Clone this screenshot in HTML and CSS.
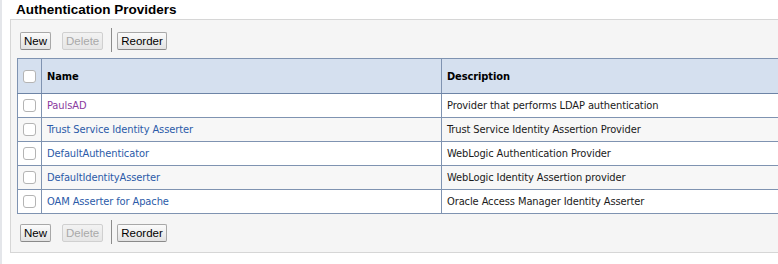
FILE: index.html
```html
<!DOCTYPE html>
<html lang="en">
<head>
    <meta charset="UTF-8">
    <title>Authentication Providers</title>
    <link rel="stylesheet" href="styles.css">
</head>
<body>
    <div class="page">
        <h2 class="title">Authentication Providers</h2>
        <div class="panel">
            <div class="toolbar">
                <button class="btn">New</button>
                <button class="btn" disabled>Delete</button>
                <span class="sep"></span>
                <button class="btn">Reorder</button>
            </div>
            <table class="grid">
                <thead>
                    <tr>
                        <th class="col-check"><span class="check"></span></th>
                        <th class="col-name">Name</th>
                        <th class="col-desc">Description</th>
                    </tr>
                </thead>
                <tbody>
                    <tr>
                        <td class="col-check"><span class="check"></span></td>
                        <td><a href="#" class="visited">PaulsAD</a></td>
                        <td>Provider that performs LDAP authentication</td>
                    </tr>
                    <tr>
                        <td class="col-check"><span class="check"></span></td>
                        <td><a href="#">Trust Service Identity Asserter</a></td>
                        <td>Trust Service Identity Assertion Provider</td>
                    </tr>
                    <tr>
                        <td class="col-check"><span class="check"></span></td>
                        <td><a href="#">DefaultAuthenticator</a></td>
                        <td>WebLogic Authentication Provider</td>
                    </tr>
                    <tr>
                        <td class="col-check"><span class="check"></span></td>
                        <td><a href="#">DefaultIdentityAsserter</a></td>
                        <td>WebLogic Identity Assertion provider</td>
                    </tr>
                    <tr>
                        <td class="col-check"><span class="check"></span></td>
                        <td><a href="#">OAM Asserter for Apache</a></td>
                        <td>Oracle Access Manager Identity Asserter</td>
                    </tr>
                </tbody>
            </table>
            <div class="toolbar bottom">
                <button class="btn">New</button>
                <button class="btn" disabled>Delete</button>
                <span class="sep"></span>
                <button class="btn">Reorder</button>
            </div>
        </div>
    </div>
</body>
</html>
```

FILE: styles.css
```css
* {
    margin: 0;
    padding: 0;
    box-sizing: border-box;
}
body {
    background: #fff;
    overflow: hidden;
    font-family: "DejaVu Sans", sans-serif;
}
.page {
    border-left: 2px solid #e4e6ea;
    min-height: 264px;
    padding-left: 8px;
}
.title {
    font-family: "Liberation Sans", Arial, sans-serif;
    font-size: 13.5px;
    font-weight: bold;
    color: #000;
    height: 19px;
    line-height: 19px;
    padding-left: 6px;
}
.panel {
    width: 800px;
    background: #f5f5f5;
    border-top: 1px solid #d6d6d6;
    border-left: 1px solid #d6d6d6;
    border-bottom: 1px solid #d6d6d6;
    padding: 8px 0 8px 6px;
}
.toolbar {
    display: flex;
    align-items: center;
    height: 24px;
    padding-left: 3px;
    margin-bottom: 6px;
}
.toolbar.bottom {
    margin: 6px 0 0;
}
.btn {
    font-family: "Liberation Sans", Arial, sans-serif;
    font-size: 11.5px;
    color: #000;
    height: 18px;
    padding: 0 3px;
    margin-top: 2px;
    margin-right: 11px;
    background: linear-gradient(#fbfbfb, #e2e2e2);
    border: 1px solid #a8a8a8;
    border-bottom-color: #8a8a8a;
    border-radius: 2px;
}
.btn:disabled {
    color: #a9a9a9;
    border-color: #d0d0d0;
    background: linear-gradient(#f2f2f2, #e6e6e6);
    margin-right: 8px;
}
.sep {
    width: 1px;
    height: 24px;
    background: #8c8c8c;
    margin-right: 5px;
}
.grid {
    width: 790px;
    border-collapse: collapse;
    font-size: 11px;
    letter-spacing: -0.1px;
    font-stretch: condensed;
    background: #fff;
}
.grid th,
.grid td {
    border: 1px solid #7f93b1;
    text-align: left;
    padding: 0 5px;
}
.grid th {
    background: #d5e0ef;
    height: 35px;
    font-weight: bold;
    color: #000;
    border-bottom-color: #6d84a6;
}
.grid td {
    height: 24px;
    color: #1a1a1a;
}
.grid tbody tr:nth-child(even) td {
    background: #f7f7f7;
}
.grid .col-check {
    width: 24px;
    padding: 0 0 0 5px;
}
.grid .col-name {
    width: 400px;
}
.check {
    display: block;
    width: 13px;
    height: 13px;
    background: #fff;
    border: 1px solid #b4b4b4;
    border-radius: 3px;
}
.grid a {
    color: #2b5aa8;
    text-decoration: none;
}
.grid a.visited {
    color: #8a3a9e;
}
```
